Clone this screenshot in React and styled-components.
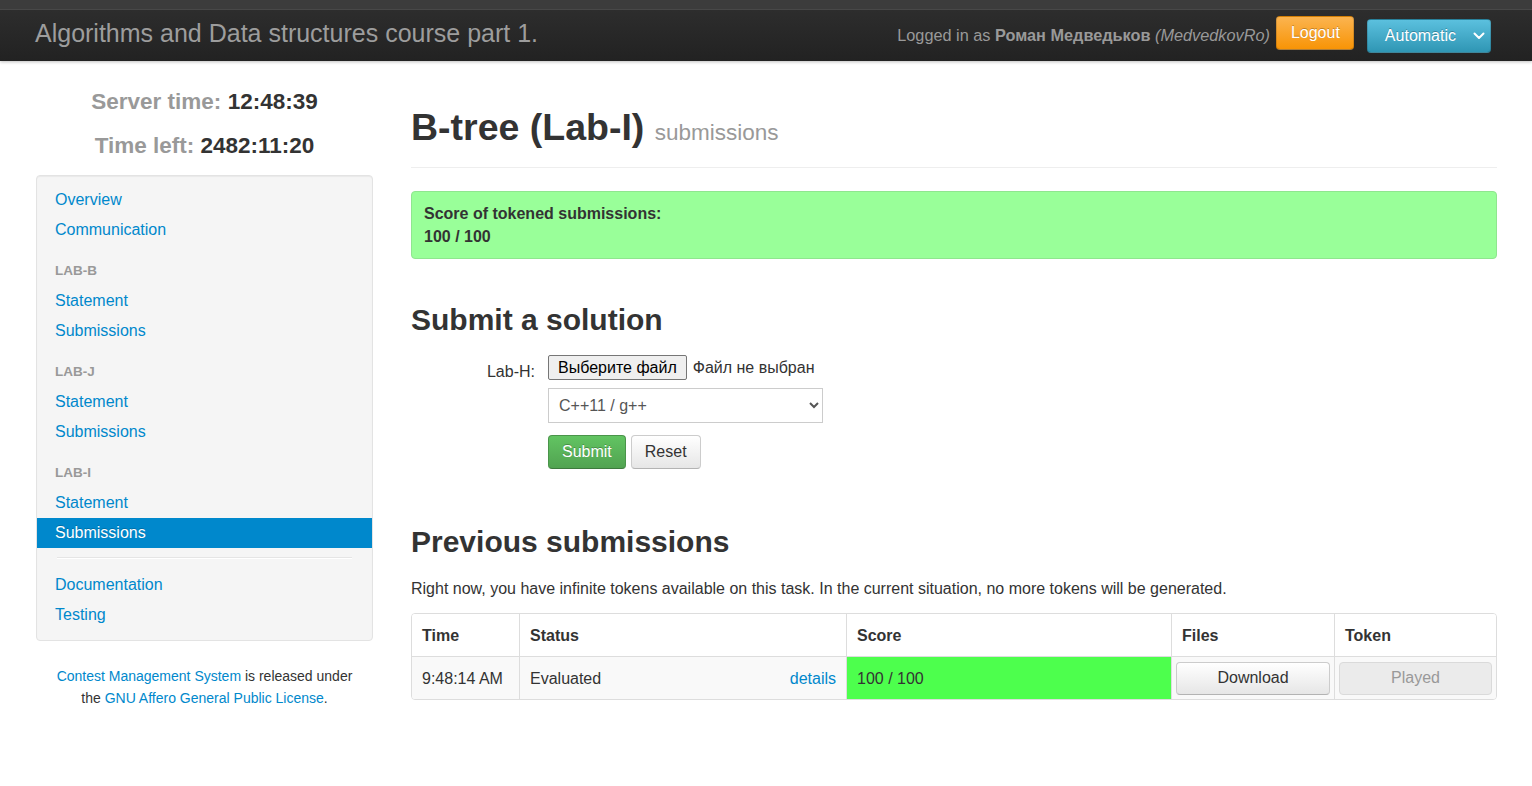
import React from "react";
import styled, { createGlobalStyle } from "styled-components";

const Global = createGlobalStyle`
  html, body { margin: 0; padding: 0; background: #fff; }
  body {
    font-family: "Liberation Sans", Arial, Helvetica, sans-serif;
    font-size: 16px;
    line-height: 23px;
    color: #333;
  }
  * { box-sizing: border-box; }
`;

const Navbar = styled.header`
  height: 61px;
  padding-top: 10px;
  background: linear-gradient(
    to bottom,
    #3c3c3c 0px,
    #3c3c3c 9px,
    #484848 9px,
    #484848 10px,
    #2d2d2d 10px,
    #222 61px
  );
  box-shadow: 0 1px 3px rgba(0, 0, 0, 0.25);
  position: relative;
  z-index: 2;
`;

const NavInner = styled.div`
  height: 51px;
  padding: 0 41px 0 35px;
  display: flex;
  align-items: center;
`;

const Brand = styled.div`
  font-size: 25px;
  line-height: 30px;
  color: #9d9d9d;
  margin-top: -6px;
  flex: 1;
`;

const NavText = styled.div`
  font-size: 16.3px;
  color: #999;
  margin-right: 6px;
  b { font-weight: bold; }
  i { font-style: italic; }
`;

const NavButton = styled.button`
  font-family: inherit;
  font-size: 16px;
  height: 34px;
  border-radius: 4px;
  color: #fff;
  text-shadow: 0 -1px 0 rgba(0, 0, 0, 0.25);
  border: 1px solid rgba(0, 0, 0, 0.15);
  border-bottom-color: rgba(0, 0, 0, 0.3);
  display: flex;
  align-items: center;
  cursor: pointer;
  background: ${(p) =>
    p.$tone === "warning"
      ? "linear-gradient(to bottom, #fbb450, #f89406)"
      : "linear-gradient(to bottom, #5bc0de, #2f96b4)"};
  gap: ${(p) => (p.$tone === "warning" ? "0" : "17px")};
  padding: ${(p) => (p.$tone === "warning" ? "0 13px 1px 14px" : "0 5px 0 17px")};
  margin: ${(p) => (p.$tone === "warning" ? "-5px 13px 0 0" : "1px 0 0 0")};
`;

const Page = styled.div`
  display: flex;
  gap: 38px;
  padding: 0 35px 0 36px;
`;

const Sidebar = styled.aside`
  width: 337px;
  flex: none;
  padding-top: 19px;
`;

const Clock = styled.div`
  text-align: center;
  font-size: 22.5px;
  line-height: 44px;
  font-weight: bold;
  color: #999;
  span { color: #333; }
`;

const Well = styled.nav`
  margin-top: 7px;
  background: #f5f5f5;
  border: 1px solid #e3e3e3;
  border-radius: 4px;
  box-shadow: inset 0 1px 1px rgba(0, 0, 0, 0.05);
  padding: 9px 0 10px;
`;

const NavLink = styled.a`
  display: block;
  padding: 0 18px;
  line-height: 30px;
  font-size: 16px;
  text-decoration: none;
  color: ${(p) => (p.$active ? "#fff" : "#0088cc")};
  background: ${(p) => (p.$active ? "#0088cc" : "transparent")};
  text-shadow: ${(p) => (p.$active ? "0 -1px 0 rgba(0,0,0,0.2)" : "none")};
`;

const NavHeader = styled.div`
  margin-top: 11px;
  padding: 0 18px;
  line-height: 30px;
  font-size: 13.5px;
  font-weight: bold;
  text-transform: uppercase;
  color: #999;
`;

const Divider = styled.div`
  height: 2px;
  margin: 9px 20px 11px;
  border-top: 1px solid #e5e5e5;
  border-bottom: 1px solid #fff;
`;

const Footer = styled.p`
  margin: 24px 0 0;
  text-align: center;
  font-size: 14px;
  line-height: 22px;
  color: #333;
  a { color: #0088cc; text-decoration: none; }
`;

const Main = styled.main`
  flex: 1;
  min-width: 0;
`;

const PageHeader = styled.div`
  margin-top: 46px;
  padding-bottom: 20px;
  border-bottom: 1px solid #eee;
`;

const Title = styled.h1`
  margin: 0;
  font-size: 37.5px;
  line-height: 40px;
  font-weight: bold;
  color: #333;
  small {
    font-size: 22.5px;
    line-height: 0;
    font-weight: normal;
    color: #999;
  }
`;

const Alert = styled.div`
  margin-top: 23px;
  background: #99ff99;
  border: 1px solid #8fe68f;
  border-radius: 4px;
  padding: 10px 12px;
  font-weight: bold;
  line-height: 23px;
`;

const Heading = styled.h2`
  margin: ${(p) => p.$top}px 0 0;
  font-size: 30px;
  line-height: 40px;
  font-weight: bold;
  color: #333;
`;

const FormRow = styled.div`
  margin-top: 15px;
  display: grid;
  grid-template-columns: 124px auto;
  column-gap: 13px;
  justify-content: start;
`;

const Label = styled.label`
  text-align: right;
  padding-top: 4px;
  line-height: 25px;
  font-size: 16px;
`;

const Controls = styled.div`
  display: flex;
  flex-direction: column;
  align-items: flex-start;
`;

const FileRow = styled.div`
  display: flex;
  align-items: center;
  gap: 6px;
  height: 25px;
`;

const FileButton = styled.button`
  height: 25px;
  padding: 0 9px;
  font-family: inherit;
  font-size: 16px;
  color: #000;
  background: #efefef;
  border: 1px solid #767676;
  border-radius: 2px;
`;

const Select = styled.select`
  margin-top: 8px;
  width: 275px;
  height: 35px;
  padding: 0 6px;
  font-family: inherit;
  font-size: 16px;
  color: #555;
  background: #fff;
  border: 1px solid #ccc;
  border-radius: 0;
`;

const ButtonRow = styled.div`
  margin-top: 12px;
  display: flex;
  gap: 5px;
`;

const Btn = styled.button`
  height: 34px;
  padding: 0 13px;
  font-family: inherit;
  font-size: 16px;
  border-radius: 4px;
  cursor: pointer;
  ${(p) =>
    p.$primary
      ? `
    color: #fff;
    text-shadow: 0 -1px 0 rgba(0,0,0,0.25);
    background: linear-gradient(to bottom, #62c462, #51a351);
    border: 1px solid #4a944a;
    border-bottom-color: #3d7a3d;
  `
      : `
    color: #333;
    background: linear-gradient(to bottom, #ffffff, #e6e6e6);
    border: 1px solid #ccc;
    border-bottom-color: #b3b3b3;
  `}
`;

const Paragraph = styled.p`
  margin: 15px 0 0;
  line-height: 23px;
`;

const Table = styled.div`
  margin-top: 13px;
  border: 1px solid #ddd;
  border-radius: 4px;
  overflow: hidden;
`;

const Row = styled.div`
  display: grid;
  grid-template-columns: 107px 327px 325px 163px 1fr;
  background: ${(p) => (p.$striped ? "#f9f9f9" : "#fff")};
  border-top: ${(p) => (p.$striped ? "1px solid #ddd" : "none")};
`;

const Cell = styled.div`
  height: 42px;
  display: flex;
  align-items: center;
  justify-content: ${(p) => (p.$spread ? "space-between" : "flex-start")};
  padding: ${(p) => (p.$tight ? "0 4px" : "0 10px")};
  border-left: ${(p) => (p.$first ? "none" : "1px solid #ddd")};
  background: ${(p) => p.$bg || "transparent"};
  font-weight: ${(p) => (p.$head ? "bold" : "normal")};
  a { color: #0088cc; text-decoration: none; }
`;

const CellButton = styled.button`
  width: 100%;
  height: 33px;
  font-family: inherit;
  font-size: 16px;
  border-radius: 4px;
  ${(p) =>
    p.disabled
      ? `
    color: #999;
    background: #ebebeb;
    border: 1px solid #dadada;
  `
      : `
    color: #333;
    background: linear-gradient(to bottom, #ffffff, #e6e6e6);
    border: 1px solid #ccc;
    border-bottom-color: #b3b3b3;
    cursor: pointer;
  `}
`;

const Chevron = () => (
  <svg width="12" height="8" viewBox="0 0 12 8" aria-hidden="true">
    <path d="M1.5 1.5 L6 6 L10.5 1.5" fill="none" stroke="#fff" strokeWidth="2" strokeLinecap="round" strokeLinejoin="round" />
  </svg>
);

export default function App() {
  return (
    <>
      <Global />
      <Navbar>
        <NavInner>
          <Brand>Algorithms and Data structures course part 1.</Brand>
          <NavText>
            Logged in as <b>Роман Медведьков</b> <i>(MedvedkovRo)</i>
          </NavText>
          <NavButton $tone="warning">Logout</NavButton>
          <NavButton $tone="info">
            Automatic <Chevron />
          </NavButton>
        </NavInner>
      </Navbar>
      <Page>
        <Sidebar>
          <Clock>
            Server time: <span>12:48:39</span>
          </Clock>
          <Clock>
            Time left: <span>2482:11:20</span>
          </Clock>
          <Well>
            <NavLink href="#">Overview</NavLink>
            <NavLink href="#">Communication</NavLink>
            <NavHeader>Lab-B</NavHeader>
            <NavLink href="#">Statement</NavLink>
            <NavLink href="#">Submissions</NavLink>
            <NavHeader>Lab-J</NavHeader>
            <NavLink href="#">Statement</NavLink>
            <NavLink href="#">Submissions</NavLink>
            <NavHeader>Lab-I</NavHeader>
            <NavLink href="#">Statement</NavLink>
            <NavLink href="#" $active>
              Submissions
            </NavLink>
            <Divider />
            <NavLink href="#">Documentation</NavLink>
            <NavLink href="#">Testing</NavLink>
          </Well>
          <Footer>
            <a href="#">Contest Management System</a> is released under
            <br />
            the <a href="#">GNU Affero General Public License</a>.
          </Footer>
        </Sidebar>
        <Main>
          <PageHeader>
            <Title>
              B-tree (Lab-I) <small>submissions</small>
            </Title>
          </PageHeader>
          <Alert>
            Score of tokened submissions:
            <br />
            100 / 100
          </Alert>
          <Heading $top={41}>Submit a solution</Heading>
          <FormRow>
            <Label>Lab-H:</Label>
            <Controls>
              <FileRow>
                <FileButton type="button">Выберите файл</FileButton>
                <span>Файл не выбран</span>
              </FileRow>
              <Select defaultValue="cpp">
                <option value="cpp">C++11 / g++</option>
              </Select>
              <ButtonRow>
                <Btn $primary>Submit</Btn>
                <Btn>Reset</Btn>
              </ButtonRow>
            </Controls>
          </FormRow>
          <Heading $top={53}>Previous submissions</Heading>
          <Paragraph>
            Right now, you have infinite tokens available on this task. In the current situation, no more tokens will
            be generated.
          </Paragraph>
          <Table>
            <Row>
              <Cell $first $head>Time</Cell>
              <Cell $head>Status</Cell>
              <Cell $head>Score</Cell>
              <Cell $head>Files</Cell>
              <Cell $head>Token</Cell>
            </Row>
            <Row $striped>
              <Cell $first>9:48:14 AM</Cell>
              <Cell $spread>
                <span>Evaluated</span>
                <a href="#">details</a>
              </Cell>
              <Cell $bg="#4dff4d">100 / 100</Cell>
              <Cell $tight>
                <CellButton>Download</CellButton>
              </Cell>
              <Cell $tight>
                <CellButton disabled>Played</CellButton>
              </Cell>
            </Row>
          </Table>
        </Main>
      </Page>
    </>
  );
}
